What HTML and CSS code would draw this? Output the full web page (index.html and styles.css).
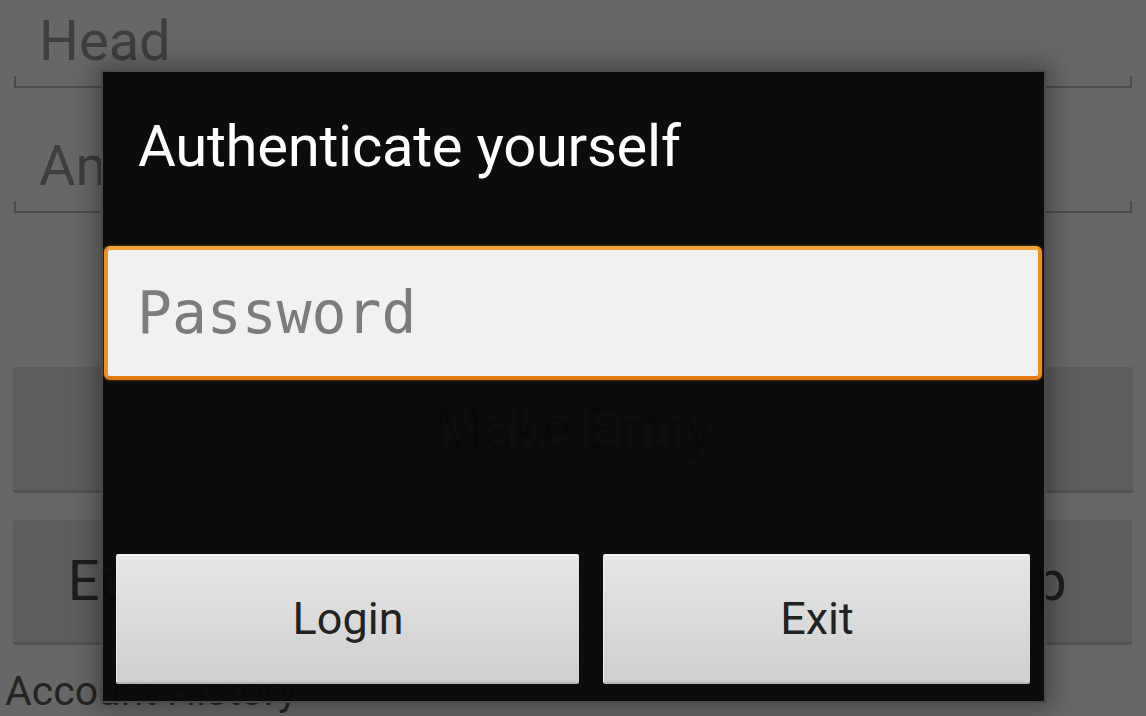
FILE: index.html
```html
<!DOCTYPE html>
<html lang="en">
<head>
<meta charset="utf-8">
<title>Authenticate yourself</title>
<link rel="stylesheet" href="styles.css">
</head>
<body>
<div class="screen">
  <div class="field field-first">
    <div class="field-text">Head</div>
    <div class="field-line"></div>
  </div>
  <div class="field field-second">
    <div class="field-text">Amount</div>
    <div class="field-line"></div>
  </div>
  <div class="bg-btn bg-btn-wide">Make Entry</div>
  <div class="bg-row">
    <div class="bg-btn bg-btn-a">Edit Heads</div>
    <div class="bg-btn bg-btn-c">Backup</div>
  </div>
  <div class="bg-label">Account History</div>
</div>

<div class="dialog">
  <div class="dialog-title">Authenticate yourself</div>
  <div class="pw-field"><span class="pw-hint">Password</span></div>
  <div class="dialog-buttons">
    <div class="dlg-btn dlg-btn-login">Login</div>
    <div class="dlg-btn dlg-btn-exit">Exit</div>
  </div>
</div>
</body>
</html>
```

FILE: styles.css
```css
html, body {
  margin: 0;
  padding: 0;
}
body {
  width: 1146px;
  height: 716px;
  overflow: hidden;
  background: #676767;
  font-family: Roboto, "Open Sans", "Liberation Sans", sans-serif;
  position: relative;
}

.screen {
  display: flex;
  flex-direction: column;
  padding: 0 13px;
}

.field {
  display: flex;
  flex-direction: column;
  margin: 0 1px;
}
.field-first { padding-top: 8px; }
.field-second { padding-top: 45px; }

.field-text {
  font-size: 56px;
  line-height: 66px;
  height: 66px;
  color: #3e3e3e;
  padding-left: 25px;
}
.field-line {
  margin-top: 2px;
  height: 10px;
  border: 2px solid #4c4c4c;
  border-top: none;
}

.bg-btn {
  display: flex;
  align-items: center;
  justify-content: center;
  background: #5d5d5d;
  border-bottom: 3px solid #525252;
  box-sizing: border-box;
  color: #1c1c1c;
  font-size: 56px;
  line-height: 66px;
  border-radius: 2px;
}
.bg-btn-wide {
  margin-top: 154px;
  height: 126px;
}
.bg-row {
  display: flex;
  justify-content: space-between;
  margin-top: 27px;
  height: 125px;
  padding-right: 1px;
}
.bg-row .bg-btn { height: 125px; }
.bg-btn-a { flex: 0 0 379px; }
.bg-btn-c { flex: 0 0 316px; }

.bg-label {
  margin-top: 22px;
  margin-left: -8px;
  font-size: 41px;
  line-height: 48px;
  color: #242424;
}

/* Overlay dialog */
.dialog {
  position: absolute;
  left: 101px;
  top: 70px;
  width: 941px;
  height: 629px;
  border: 2px solid #4a4a4a;
  background: rgba(9, 9, 9, 0.968);
  box-shadow: 0 0 22px 6px rgba(0, 0, 0, 0.32);
  display: flex;
  flex-direction: column;
}

.dialog-title {
  padding: 40px 0 0 35px;
  font-size: 58px;
  line-height: 68px;
  height: 68px;
  color: #ffffff;
  letter-spacing: -0.3px;
}

.pw-field {
  margin: 66px 2px 0 1px;
  height: 134px;
  box-sizing: border-box;
  border: 4px solid #ee8f22;
  border-top-color: #f4a232;
  border-bottom-color: #e27b12;
  border-radius: 6px;
  background: #f1f1f1;
  display: flex;
  align-items: center;
  padding-left: 29px;
  box-shadow: 0 0 3px rgba(240, 140, 30, 0.5);
}
.pw-hint {
  font-family: "DejaVu Sans Mono", "Liberation Mono", monospace;
  font-size: 58px;
  line-height: 66px;
  color: #7c7c7c;
}

.dialog-buttons {
  margin-top: 174px;
  display: flex;
  gap: 24px;
  padding: 0 14px 0 13px;
}
.dlg-btn {
  height: 130px;
  box-sizing: border-box;
  display: flex;
  align-items: center;
  justify-content: center;
  font-size: 45px;
  line-height: 52px;
  color: #222222;
  background: linear-gradient(#e6e6e6, #cfcfcf);
  border-top: 2px solid #f2f2f2;
  border-left: 1px solid #ececec;
  border-bottom: 2px solid #b4b4b4;
  border-radius: 2px;
}
.dlg-btn-login { flex: 0 0 463px; }
.dlg-btn-exit { flex: 0 0 427px; }
```
